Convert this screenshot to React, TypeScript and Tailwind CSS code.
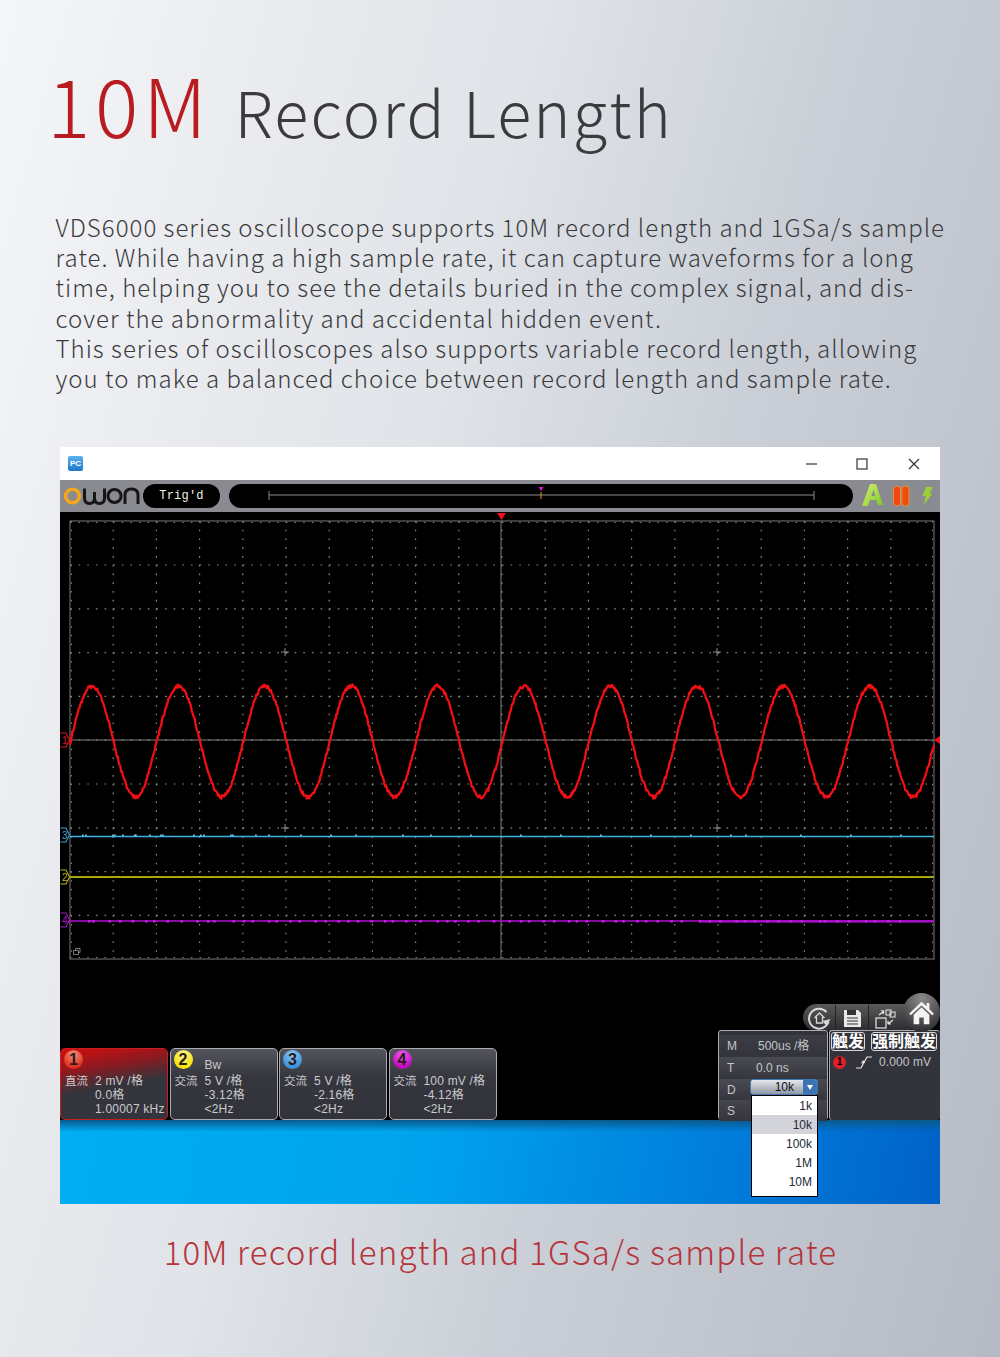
import React from "react"

// deterministic jitter so the traces look noisy but stay stable between runs
const jitter = (i: number) => {
  const v = Math.sin(i * 12.9898) * 43758.5453
  return v - Math.floor(v) - 0.5
}

const sinePoints = () => {
  const pts: string[] = []
  for (let x = 70; x <= 934; x += 0.8) {
    const y = 741.5 - 55.5 * Math.sin(((x - 70.5) / 86.4) * 2 * Math.PI) + jitter(x * 10) * 3.6
    pts.push(`${x.toFixed(1)},${y.toFixed(1)}`)
  }
  return pts.join(" ")
}

const xGrid = Array.from({ length: 19 }, (_, i) => 113.2 + i * 43.2)
const yGrid = Array.from({ length: 9 }, (_, i) => 565 + i * 43.8)
const crosses = [
  [285, 652],
  [717, 652],
  [285, 828],
  [717, 828],
]
const blueSpikes = [82, 85, 112, 114, 122, 134, 135, 149, 160, 162, 193, 200, 203, 230, 232, 255, 268, 300, 330, 355, 402, 430, 470, 520, 560, 600, 650, 690, 730, 745, 800, 850, 900]
const purpleSpikes = Array.from({ length: 70 }, (_, i) => 72 + i * 12 + jitter(i) * 9)

const markers = [
  { y: 740, n: "1", color: "#d8141c" },
  { y: 835, n: "3", color: "#3f9fd0" },
  { y: 877, n: "2", color: "#b9b414" },
  { y: 920, n: "4", color: "#a416c4" },
]

function ScopeGrid() {
  return (
    <svg viewBox="60 512 880 481" className="block h-[481px] w-[880px] shrink-0">
      {xGrid.map((x) => (
        <line key={x} x1={x} x2={x} y1={521} y2={959} stroke="#8a8a8a" strokeWidth={1.2} strokeDasharray="1.6 7.16" />
      ))}
      {yGrid.map((y) => (
        <line key={y} x1={70} x2={934} y1={y} y2={y} stroke="#8a8a8a" strokeWidth={1.2} strokeDasharray="1.6 7.04" />
      ))}
      <rect x="70" y="521" width="864" height="438" fill="none" stroke="#7a7a7a" />
      <line x1={70} x2={934} y1={522.5} y2={522.5} stroke="#888" strokeDasharray="1.4 7.24" />
      <line x1={70} x2={934} y1={957.5} y2={957.5} stroke="#888" strokeDasharray="1.4 7.24" />
      <line x1={71.5} x2={71.5} y1={521} y2={959} stroke="#888" strokeDasharray="1.4 7.36" />
      <line x1={932.5} x2={932.5} y1={521} y2={959} stroke="#888" strokeDasharray="1.4 7.36" />
      <line x1={501} x2={501} y1={521} y2={959} stroke="#808080" />
      <line x1={70} x2={934} y1={740} y2={740} stroke="#808080" />
      {crosses.map(([x, y]) => (
        <path key={x + "-" + y} d={`M${x - 4} ${y}H${x + 4}M${x} ${y - 4}V${y + 4}`} stroke="#8a8a8a" />
      ))}

      <line x1={70} x2={934} y1={836.5} y2={836.5} stroke="#3fb0e4" strokeWidth={1.3} />
      {blueSpikes.map((x) => (
        <rect key={x} x={x} y={834.5} width={1.8} height={2} fill="#62c0ea" />
      ))}
      <line x1={70} x2={934} y1={877} y2={877} stroke="#a8a60e" strokeWidth={2} />
      <line x1={70} x2={934} y1={921} y2={921} stroke="#b012d4" strokeWidth={1.4} />
      <line x1={700} x2={934} y1={921.5} y2={921.5} stroke="#b012d4" strokeWidth={2.2} />
      {purpleSpikes.map((x) => (
        <rect key={x} x={x} y={920} width={2.6} height={2.6} fill="#c01ae0" />
      ))}
      <polyline points={sinePoints()} fill="none" stroke="#f00f14" strokeWidth={2.3} strokeLinejoin="round" />

      {markers.map((m) => (
        <g key={m.n}>
          <path
            d={`M60.5 ${m.y - 7}H66L69.5 ${m.y}L66 ${m.y + 7}H60.5`}
            fill="#000"
            stroke={m.color}
            strokeWidth={1.1}
          />
          <text x={62} y={m.y + 3.5} fontSize="10" fill={m.color} fontFamily="Liberation Sans, sans-serif">
            {m.n}
          </text>
        </g>
      ))}
      <path d="M497 513H506L501.5 520Z" fill="#f01018" />
      <path d="M940 736V744L934 740Z" fill="#f01018" />
      <path d="M73.5 950.5H78.5V954.5H73.5ZM75.5 950.5V948.5H80V952.5H78.5" fill="none" stroke="#888" strokeWidth={0.9} />
    </svg>
  )
}

function OwonLogo() {
  return (
    <svg viewBox="0 0 78 24" className="h-[24px] w-[78px] shrink-0">
      <circle cx="9.5" cy="12" r="6.8" fill="none" stroke="#f5a81c" strokeWidth="3.6" />
      <path d="M21.5 4.5V14Q21.5 19.5 26.5 19.5Q31.5 19.5 31.5 14V8V14Q31.5 19.5 36.5 19.5Q41.5 19.5 41.5 14V4.5" fill="none" stroke="#161616" strokeWidth="3" />
      <circle cx="51.5" cy="12" r="6.6" fill="none" stroke="#161616" strokeWidth="3" />
      <path d="M62 20V11Q62 5 68.5 5Q75 5 75 11V20" fill="none" stroke="#161616" strokeWidth="3" />
    </svg>
  )
}

function Timeline() {
  return (
    <div className="ml-[9px] h-[24px] w-[624px] shrink-0 rounded-full bg-black">
      <svg viewBox="229 484 624 24" className="block h-full w-full">
        <line x1={269} x2={814} y1={495} y2={495} stroke="#8a8a8a" />
        <line x1={269} x2={269} y1={491} y2={500} stroke="#8a8a8a" />
        <line x1={814} x2={814} y1={491} y2={500} stroke="#8a8a8a" />
        <line x1={541} x2={541} y1={492} y2={499} stroke="#e8a020" />
        <path d="M538.5 487H543.5L541 491Z" fill="#e010e0" />
      </svg>
    </div>
  )
}

function ToolbarIcons() {
  return (
    <svg viewBox="860 482 76 28" className="ml-[7px] h-[28px] w-[76px] shrink-0">
      <defs>
        <linearGradient id="aFace" x1="0" y1="0" x2="1" y2="1">
          <stop offset="0" stopColor="#d8f070" />
          <stop offset="1" stopColor="#7cc828" />
        </linearGradient>
      </defs>
      <path d="M862 506L870 484H876L883 505L878 505L876.5 500H870L868 506Z" fill="url(#aFace)" />
      <path d="M871.5 496H875.2L873.4 489.5Z" fill="#8a8b90" />
      <rect x="893.5" y="486" width="7" height="20" rx="3.5" fill="#f04a10" stroke="#f8a020" strokeWidth="0.7" />
      <rect x="902" y="486" width="7" height="20" rx="3.5" fill="#f04a10" stroke="#f8a020" strokeWidth="0.7" />
      <path d="M926 487H933L929.5 493.5H932.5L923.5 505L926 496H922.5Z" fill="#9bcf3a" />
    </svg>
  )
}

function ChannelCard({
  n,
  dot,
  active,
  bw,
  coupling,
  scale,
  offset,
  freq,
}: {
  n: string
  dot: string
  active?: boolean
  bw?: boolean
  coupling: string
  scale: string
  offset: string
  freq: string
}) {
  return (
    <div
      className={
        active
          ? "relative h-[72px] w-[108px] rounded-[5px] border border-[#c81e22] bg-[linear-gradient(170deg,#d40d10_0%,#8a1a20_28%,#34353c_52%)] text-[#c9cacd]"
          : "relative h-[72px] w-[108px] rounded-[5px] border border-[#a9abb0] bg-[linear-gradient(180deg,#54555c_0%,#36373e_40%,#32333a_100%)] text-[#c9cacd]"
      }
    >
      <span className={`absolute left-[3px] top-[1px] flex h-[19px] w-[19px] items-center justify-center rounded-full text-[16px] font-bold leading-none text-[#2a1a1a] ${dot}`}>
        {n}
      </span>
      {bw && <span className="absolute left-[34px] top-[9px] text-[12px] leading-[14px]">Bw</span>}
      <div className="flex pl-[4px] pt-[25px] text-[12px] leading-[14px] tracking-[0.2px]">
        <span className="w-[30px] shrink-0 text-[11.5px] tracking-normal">{coupling}</span>
        <div className="whitespace-nowrap">
          <div>{scale}</div>
          <div>{offset}</div>
          <div>{freq}</div>
        </div>
      </div>
    </div>
  )
}

const ddItems = ["1k", "10k", "100k", "1M", "10M"]
const timeRows = [
  { k: "M", v: "500us /格", vc: "pl-[22px]", bg: "bg-[linear-gradient(180deg,#3d3e45,#33343b)]" },
  { k: "T", v: "0.0 ns", vc: "pl-[20px]", bg: "bg-[linear-gradient(180deg,#4a4b52,#35363d)]" },
]

function TimePanel() {
  return (
    <div className="relative h-[90px] w-[110px] shrink-0 rounded-[3px] border border-[#a9abb0] bg-[#33343b] text-[12px] text-[#c4c5c8]">
      <div className="flex h-[4px]" />
      {timeRows.map((r) => (
        <div key={r.k} className={`flex h-[22px] items-center pl-[8px] ${r.bg}`}>
          <span className="w-[9px]">{r.k}</span>
          <span className={r.vc}>{r.v}</span>
        </div>
      ))}
      <div className="flex h-[21px] items-center bg-[linear-gradient(180deg,#4a4b52,#35363d)] pl-[8px]">D</div>
      <div className="flex h-[21px] items-center bg-[linear-gradient(180deg,#44454c,#35363d)] pl-[8px]">S</div>

      {/* open sample depth select */}
      <div className="absolute left-[31px] top-[48px] flex h-[16px] w-[68px] items-center overflow-hidden rounded-[3px] border border-[#3f78b0] bg-[linear-gradient(180deg,#e6e8ec,#8f97a6)] text-[12px] text-[#111]">
        <span className="flex-1 pr-[9px] text-right">10k</span>
        <span className="flex h-full w-[14px] items-center justify-center bg-[#3a74b4]">
          <span className="h-0 w-0 border-x-[3px] border-t-[5px] border-x-transparent border-t-white" />
        </span>
      </div>
      <div className="absolute left-[32px] top-[64px] z-10 w-[67px] border border-black bg-white pb-[4px] text-[12px] font-medium text-[#222a38]">
        {ddItems.map((d) => (
          <div key={d} className={d === "10k" ? "flex h-[19px] items-center justify-end bg-[#d3d4da] pr-[5px]" : "flex h-[19.2px] items-center justify-end pr-[5px]"}>
            {d}
          </div>
        ))}
      </div>
    </div>
  )
}

function TriggerPanel() {
  return (
    <div className="ml-[1px] h-[90px] w-[111px] shrink-0 rounded-[3px] border-t border-l border-[#a9abb0] bg-[#33343b] text-[#c4c5c8]">
      <div className="flex gap-[6px] pl-[1px] pt-[1px] text-[16px] font-bold leading-[17px] text-white">
        <span className="rounded-[3px] border border-[#d8d8dc]">触发</span>
        <span className="rounded-[3px] border border-[#d8d8dc]">强制触发</span>
      </div>
      <div className="flex items-center pl-[3px] pt-[4px] text-[12px] leading-[14px]">
        <span className="flex h-[13px] w-[13px] items-center justify-center rounded-full bg-[#e0202c] text-[10px] font-bold text-black">1</span>
        <svg viewBox="0 0 18 14" className="ml-[9px] h-[14px] w-[18px]">
          <path d="M1 13H6L12 2H17" fill="none" stroke="#e4e4e4" strokeWidth="1.2" />
          <path d="M6 8.5L10 8L8 5Z" fill="#e4e4e4" />
        </svg>
        <span className="ml-[6px] tracking-[0.1px]">0.000 mV</span>
      </div>
    </div>
  )
}

function ToolPill() {
  return (
    <div className="flex h-[39px] items-end justify-end">
      <div className="-mr-[8px] mb-[1px] flex h-[27px] items-center rounded-l-full bg-[linear-gradient(180deg,#5a5a5c,#2c2c2e)] pl-[3px] pr-[12px]">
        <svg viewBox="0 0 26 26" className="h-[26px] w-[27px]">
          <path d="M20 7A10 10 0 1 0 22 17" fill="none" stroke="#d8d8d8" strokeWidth="2" />
          <path d="M24 14L20 21L16 16Z" fill="#d8d8d8" />
          <path d="M8 13L13 8L18 13M10 12V18H16V12" fill="none" stroke="#d8d8d8" strokeWidth="1.3" />
        </svg>
        <span className="mx-[2px] h-[26px] w-px bg-[#222]" />
        <svg viewBox="0 0 22 22" className="mx-[3px] h-[22px] w-[22px]">
          <path d="M3 3H17L20 6V20H3Z" fill="#e8e8e8" />
          <rect x="6" y="3" width="9" height="5" fill="#333" />
          <path d="M6 11H17M6 14H17M6 17H17" stroke="#333" strokeWidth="1.2" />
        </svg>
        <span className="mx-[2px] h-[26px] w-px bg-[#222]" />
        <svg viewBox="0 0 26 24" className="ml-[2px] h-[24px] w-[26px]">
          <rect x="3" y="12" width="10" height="10" fill="none" stroke="#e8e8e8" strokeWidth="1.2" />
          <rect x="13" y="4" width="5" height="5" fill="none" stroke="#e8e8e8" strokeWidth="1" />
          <rect x="17" y="6" width="5" height="5" fill="none" stroke="#e8e8e8" strokeWidth="1" />
          <path d="M6 9L11 5M11 5L8 4.5M11 5L10 8M20 14L15 18M15 18H18M15 18V15" fill="none" stroke="#e8e8e8" strokeWidth="1.2" />
        </svg>
      </div>
      <div className="relative flex h-[39px] w-[37px] items-center justify-center rounded-full bg-[radial-gradient(circle_at_50%_15%,#8a8a8c,#4a4a4c_60%,#232325)]">
        <svg viewBox="0 0 24 24" className="h-[27px] w-[27px]">
          <path d="M12 2.5L1 13L2.5 14.5L12 5.5L21.5 14.5L23 13L19 9V3.5H16.5V6.5Z" fill="#f4f4f4" />
          <path d="M5 14V22.5H10V16.5H14V22.5H19V14L12 7.5Z" fill="#f4f4f4" />
        </svg>
      </div>
    </div>
  )
}

function OscilloscopeWindow() {
  return (
    <div className="mx-auto w-[880px] bg-black font-['Liberation_Sans','Noto_Sans_CJK_SC',sans-serif]">
      <div className="flex h-[33px] items-center bg-white">
        <span className="ml-[8px] flex h-[15px] w-[15px] items-center justify-center rounded-[2px] bg-[linear-gradient(180deg,#5cb0ee,#1c78cc)] text-[8px] font-bold leading-none text-white">
          PC
        </span>
        <div className="ml-auto flex items-center">
          <svg viewBox="0 0 128 12" className="mr-[7px] h-[12px] w-[128px]">
            <path d="M1 6H12" stroke="#333" strokeWidth="1.2" />
            <rect x="52" y="1" width="10" height="10" fill="none" stroke="#333" strokeWidth="1.2" />
            <path d="M104 1L114 11M114 1L104 11" stroke="#333" strokeWidth="1.2" />
          </svg>
        </div>
      </div>

      <div className="flex h-[32px] items-center bg-[#8a8b90] pl-[3px]">
        <OwonLogo />
        <span className="ml-[2px] flex h-[24px] w-[77px] shrink-0 items-center justify-center rounded-full bg-black font-['Liberation_Mono',monospace] text-[12px] tracking-[0.2px] text-[#f0f0e0]">
          Trig'd
        </span>
        <Timeline />
        <ToolbarIcons />
      </div>

      <div className="h-[608px] bg-black">
        <ScopeGrid />
        <ToolPill />
        <div className="flex h-[88px] items-end">
          <div className="flex gap-[1.5px]">
            <ChannelCard n="1" dot="bg-[radial-gradient(circle_at_50%_25%,#f4907c,#e03020_70%)]" active coupling="直流" scale="2 mV /格" offset="0.0格" freq="1.00007 kHz" />
            <ChannelCard n="2" dot="bg-[radial-gradient(circle_at_50%_25%,#fbf28a,#f6e40c_70%)]" bw coupling="交流" scale="5 V /格" offset="-3.12格" freq="<2Hz" />
            <ChannelCard n="3" dot="bg-[radial-gradient(circle_at_50%_25%,#8cc8f2,#3c94dc_70%)]" coupling="交流" scale="5 V /格" offset="-2.16格" freq="<2Hz" />
            <ChannelCard n="4" dot="bg-[radial-gradient(circle_at_50%_25%,#ec60ec,#c00cc0_70%)]" coupling="交流" scale="100 mV /格" offset="-4.12格" freq="<2Hz" />
          </div>
          <div className="ml-auto flex">
            <TimePanel />
            <TriggerPanel />
          </div>
        </div>
      </div>

      <div className="h-[84px] bg-[linear-gradient(180deg,#0a5a8c_0%,rgba(0,90,150,0)_14%),linear-gradient(100deg,#00aef2_0%,#00a4ee_40%,#0080dc_72%,#0062c8_100%)]" />
    </div>
  )
}

export default function App() {
  return (
    <div className="h-[1357px] w-[1000px] overflow-hidden bg-[linear-gradient(105deg,#f5f6f8_0%,#e7e9ed_25%,#e0e3e8_40%,#cbd0d8_62%,#c3c8d1_75%,#b5bbc6_100%)] font-['Noto_Sans_CJK_SC','Noto_Sans',sans-serif]">
      <h1 className="flex items-baseline whitespace-nowrap pl-[47px] pt-[45px] font-light leading-[116px] text-[#3b3b3d]">
        <span className="text-[81px] tracking-[4.7px] text-[#b81c20]">10M</span>
        <span className="ml-[23px] text-[63px] tracking-[2.2px]">Record Length</span>
      </h1>

      <p className="ml-[55.5px] mt-[43px] w-[900px] whitespace-nowrap text-[24px] font-light leading-[30.2px] tracking-[1.02px] text-[#3b3b3d]">
        VDS6000 series oscilloscope supports 10M record length and 1GSa/s sample
        <br />
        rate. While having a high sample rate, it can capture waveforms for a long
        <br />
        time, helping you to see the details buried in the complex signal, and dis-
        <br />
        cover the abnormality and accidental hidden event.
        <br />
        This series of oscilloscopes also supports variable record length, allowing
        <br />
        you to make a balanced choice between record length and sample rate.
      </p>

      <div className="mt-[54px]">
        <OscilloscopeWindow />
      </div>

      <p className="ml-[1px] mt-[25px] text-center text-[33px] font-light leading-[44px] tracking-[1.2px] text-[#b5343a]">
        10M record length and 1GSa/s sample rate
      </p>
    </div>
  )
}
